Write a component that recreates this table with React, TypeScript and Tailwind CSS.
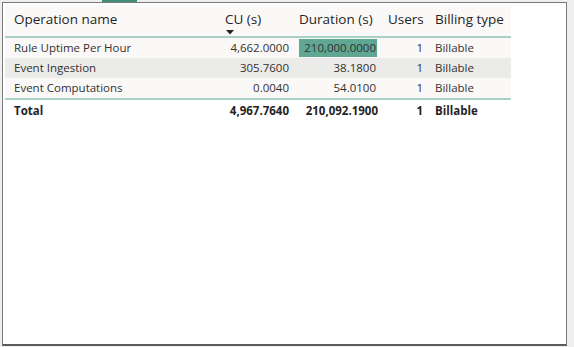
import React from "react";

type Row = {
  name: string;
  cu: string;
  duration: string;
  users: string;
  billing: string;
  bg: string;
  hot?: boolean;
};

const ROWS: Row[] = [
  { name: "Rule Uptime Per Hour", cu: "4,662.0000", duration: "210,000.0000", users: "1", billing: "Billable", bg: "bg-[#faf9f8]", hot: true },
  { name: "Event Ingestion", cu: "305.7600", duration: "38.1800", users: "1", billing: "Billable", bg: "bg-[#ebebea]" },
  { name: "Event Computations", cu: "0.0040", duration: "54.0100", users: "1", billing: "Billable", bg: "bg-[#faf9f8]" },
];

const COLS = "grid grid-cols-[215px_74px_89px_45px_83px]";

function SortArrow() {
  return (
    <svg width="8" height="5" viewBox="0 0 8 5" className="mt-[2px] ml-[1px] block">
      <polygon points="0,0 8,0 4,4.5" fill="#252423" />
    </svg>
  );
}

export default function App() {
  return (
    <div
      className="w-[574px] h-[347px] bg-[#efefef] flex flex-col overflow-hidden"
      style={{ fontFamily: '"Open Sans", "Noto Sans", sans-serif' }}
    >
      {/* top strip with active tab marker */}
      <div className="h-[2px] flex">
        <div className="ml-[102px] w-[35px] h-[2px] bg-[#3f8f78]" />
      </div>
      <div className="ml-[2px] w-[565px] h-[344px] bg-white border border-[#7a7a7a] border-b-2 border-b-[#5b5b5b] pt-[2px] pl-[2px]">
        <div className="w-[506px] text-[#252423]">
          {/* header */}
          <div className={`${COLS} h-[33px] bg-[#faf9f8] text-[13.5px] leading-[18px] border-b-2 border-[#a9d0c6]`}>
            <div className="pl-[9px] pt-[5px]">Operation name</div>
            <div className="pl-[5px] pt-[5px]">
              <div>CU (s)</div>
              <SortArrow />
            </div>
            <div className="pl-[5px] pt-[5px]">Duration (s)</div>
            <div className="pl-[5px] pt-[5px]">Users</div>
            <div className="pl-[7px] pt-[5px] whitespace-nowrap">Billing type</div>
          </div>

          {/* rows */}
          {ROWS.map((r) => (
            <div key={r.name} className={`${COLS} h-[20px] ${r.bg} text-[11.5px] leading-[20px] text-[#323130]`}>
              <div className="pl-[9px] whitespace-nowrap">{r.name}</div>
              <div className="pr-[5px] text-right">{r.cu}</div>
              <div className="pl-[5px] flex items-center">
                <div className={`w-[78px] h-[18px] leading-[18px] text-right pr-[1px] ${r.hot ? "bg-[#5fa693]" : ""}`}>
                  {r.duration}
                </div>
              </div>
              <div className="pr-[5px] text-right">{r.users}</div>
              <div className="pl-[7px]">{r.billing}</div>
            </div>
          ))}

          {/* total */}
          <div className={`${COLS} h-[22px] bg-white text-[11.5px] leading-[22px] font-bold border-t-2 border-[#a9d0c6]`}>
            <div className="pl-[9px]">Total</div>
            <div className="pr-[5px] text-right">4,967.7640</div>
            <div className="pr-[5px] text-right">210,092.1900</div>
            <div className="pr-[5px] text-right">1</div>
            <div className="pl-[7px]">Billable</div>
          </div>
        </div>
      </div>
    </div>
  );
}
